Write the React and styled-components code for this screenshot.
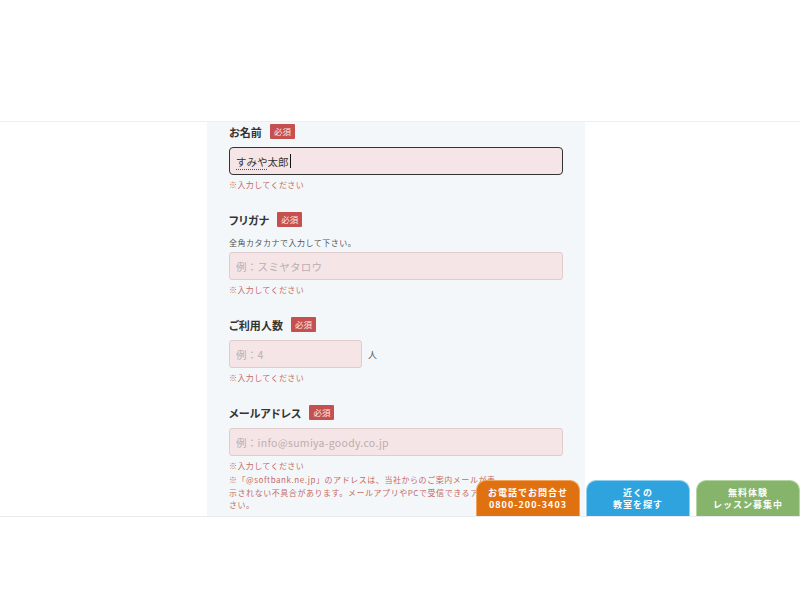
import React from "react";
import styled, { createGlobalStyle } from "styled-components";

const GlobalStyle = createGlobalStyle`
  html, body { margin: 0; padding: 0; background: #fff; }
  body { font-family: "Noto Sans CJK JP", "Noto Sans", sans-serif; color: #333; }
  * { box-sizing: border-box; }
`;

const Page = styled.div`
  width: 800px;
  height: 600px;
  display: flex;
  flex-direction: column;
  overflow: hidden;
`;

const Header = styled.header`
  height: 122px;
  flex-shrink: 0;
  border-bottom: 1px solid #eceff1;
  background: #fff;
`;

const Viewport = styled.main`
  position: relative;
  height: 394px;
  flex-shrink: 0;
  overflow: hidden;
  padding-left: 207px;
`;

const Footer = styled.footer`
  flex: 1;
  border-top: 1px solid #e9ecee;
  background: #fff;
`;

const Panel = styled.section`
  width: 378px;
  height: 100%;
  background: #f3f7f9;
  padding: 2px 22px 0;
  display: flex;
  flex-direction: column;
  gap: 21px;
`;

const Field = styled.div`
  display: flex;
  flex-direction: column;
`;

const LabelRow = styled.div`
  display: flex;
  align-items: center;
  height: 15px;
  margin-bottom: ${(p) => (p.$tight ? "0" : "8px")};
`;

const Label = styled.span`
  font-size: 11px;
  font-weight: 700;
  color: #333;
  letter-spacing: 0.1px;
  font-feature-settings: "palt";
`;

const Badge = styled.span`
  margin-left: 8px;
  height: 15px;
  line-height: 15px;
  padding: 0 4px;
  background: #c5504e;
  color: #fbe9e9;
  font-size: 8.5px;
  border-radius: 1px;
`;

const Hint = styled.div`
  margin: 10px 0 3px;
  font-size: 8px;
  line-height: 12px;
  letter-spacing: 0.5px;
  color: #555;
`;

const InputRow = styled.div`
  display: flex;
  align-items: center;
  gap: 6px;
`;

const Input = styled.input`
  width: ${(p) => p.$w || "334px"};
  height: 28px;
  padding: 0 6px;
  background: #f6e5e6;
  border: 1px solid #dfcccd;
  border-radius: 3px;
  font-family: inherit;
  font-size: 10.5px;
  color: #333;
  outline: none;
  &::placeholder { color: #b9aeb0; letter-spacing: 0.3px; }
`;

const FocusedBox = styled.div`
  width: 334px;
  height: 28px;
  padding: 0 6px;
  background: #f6e5e6;
  border: 1.5px solid #333;
  border-radius: 4px;
  display: flex;
  align-items: center;
  font-size: 10.5px;
  color: #333;
`;

const Composing = styled.span`
  text-decoration: underline dotted #555;
  text-underline-offset: 3px;
`;

const Caret = styled.span`
  display: inline-block;
  width: 1px;
  height: 14px;
  background: #111;
  margin-left: 1px;
`;

const Unit = styled.span`
  font-size: 9px;
  color: #555;
`;

const Error = styled.div`
  margin-top: 4px;
  font-size: 8px;
  line-height: 12px;
  letter-spacing: 0.4px;
  color: #c56a66;
`;

const Note = styled.p`
  margin: 2px 0 0;
  font-size: 8px;
  line-height: 12.5px;
  letter-spacing: 0.55px;
  color: #c56a66;
`;

const ButtonBar = styled.nav`
  position: absolute;
  right: 0;
  bottom: 0;
  display: flex;
  gap: 6px;
`;

const ActionButton = styled.a`
  width: 104px;
  height: 36px;
  padding-top: 6px;
  border-radius: 10px 10px 0 0;
  background: ${(p) => p.$bg};
  border: 1px solid ${(p) => p.$edge};
  border-bottom: none;
  color: #fff;
  font-size: 9px;
  font-weight: 700;
  line-height: 12px;
  letter-spacing: 1px;
  text-align: center;
  text-decoration: none;
  display: flex;
  flex-direction: column;
  align-items: center;
`;

export default function App() {
  return (
    <>
      <GlobalStyle />
      <Page>
        <Header />
        <Viewport>
          <Panel>
            <Field>
              <LabelRow>
                <Label>お名前</Label>
                <Badge>必須</Badge>
              </LabelRow>
              <FocusedBox>
                <Composing>すみや</Composing>太郎
                <Caret />
              </FocusedBox>
              <Error>※入力してください</Error>
            </Field>

            <Field>
              <LabelRow $tight>
                <Label>フリガナ</Label>
                <Badge>必須</Badge>
              </LabelRow>
              <Hint>全角カタカナで入力して下さい。</Hint>
              <Input placeholder="例：スミヤタロウ" />
              <Error>※入力してください</Error>
            </Field>

            <Field>
              <LabelRow>
                <Label>ご利用人数</Label>
                <Badge>必須</Badge>
              </LabelRow>
              <InputRow>
                <Input $w="133px" placeholder="例：4" />
                <Unit>人</Unit>
              </InputRow>
              <Error>※入力してください</Error>
            </Field>

            <Field>
              <LabelRow>
                <Label>メールアドレス</Label>
                <Badge>必須</Badge>
              </LabelRow>
              <Input placeholder="例：info@sumiya-goody.co.jp" />
              <Error>※入力してください</Error>
              <Note>
                ※「@softbank.ne.jp」のアドレスは、当社からのご案内メールが表
                <br />
                示されない不具合があります。メールアプリやPCで受信できるアドレスをご入力ください。
              </Note>
            </Field>
          </Panel>

          <ButtonBar>
            <ActionButton $bg="#df7111" $edge="#f0a45e">
              <span>お電話でお問合せ</span>
              <span>0800-200-3403</span>
            </ActionButton>
            <ActionButton $bg="#2ea3dd" $edge="#8fd0f0">
              <span>近くの</span>
              <span>教室を探す</span>
            </ActionButton>
            <ActionButton $bg="#86b46a" $edge="#b5d3a3">
              <span>無料体験</span>
              <span>レッスン募集中</span>
            </ActionButton>
          </ButtonBar>
        </Viewport>
        <Footer />
      </Page>
    </>
  );
}
